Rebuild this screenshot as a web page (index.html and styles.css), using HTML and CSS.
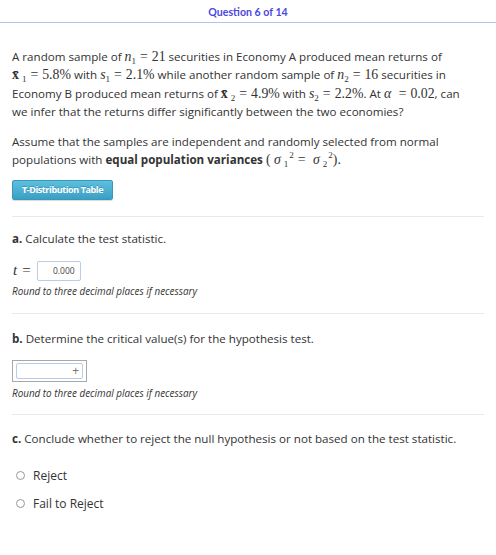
FILE: index.html
```html
<!DOCTYPE html>
<html>
<head>
<meta charset="utf-8">
<link rel="stylesheet" href="styles.css">
</head>
<body>
<div class="header"><span class="qnum">Question 6 of 14</span></div>
<div class="content">
  <p class="para">A random sample of <span class="m"><i>n</i><sub>1</sub><span class="eq">=</span>21</span> securities in Economy A produced mean returns of<br>
  <span class="m"><b>x̄</b><sub class="sp">1</sub><span class="eq">=</span>5.8%</span> with <span class="m"><i>s</i><sub>1</sub><span class="eq">=</span>2.1%</span> while another random sample of <span class="m"><i>n</i><sub>2</sub><span class="eq">=</span>16</span> securities in<br>
  Economy B produced mean returns of <span class="m"><b>x̄</b><sub class="sp">2</sub><span class="eq">=</span>4.9%</span> with <span class="m"><i>s</i><sub>2</sub><span class="eq">=</span>2.2%</span>. At <span class="m"><i>α</i> <span class="eq">=</span>0.02</span>, can<br>
  we infer that the returns differ significantly between the two economies?</p>
  <p class="para p2">Assume that the samples are independent and randomly selected from normal<br>
  populations with <b>equal population variances</b> <span class="m">( <i>σ</i><sub class="sp">1</sub><sup>2</sup><span class="eq">=</span> <i>σ</i><sub class="sp">2</sub><sup>2</sup>).</span></p>
  <button class="tbtn">T-Distribution Table</button>

  <section class="part pa">
    <p class="q"><b>a.</b> Calculate the test statistic.</p>
    <div class="ansrow"><span class="m tv"><i>t</i><span class="eq">=</span></span><span class="inp">0.000</span></div>
    <p class="hint">Round to three decimal places if necessary</p>
  </section>

  <section class="part pb">
    <p class="q"><b>b.</b> Determine the critical value(s) for the hypothesis test.</p>
    <div class="outer"><span class="inp2">+</span></div>
    <p class="hint">Round to three decimal places if necessary</p>
  </section>

  <section class="part pc">
    <p class="q"><b>c.</b> Conclude whether to reject the null hypothesis or not based on the test statistic.</p>
    <label class="radio"><span class="dot"></span>Reject</label>
    <label class="radio"><span class="dot"></span>Fail to Reject</label>
  </section>
</div>
</body>
</html>
```
FILE: styles.css
```css
html, body { margin: 0; padding: 0; background: #fff; }
body { font-family: "Open Sans", sans-serif; color: #333; font-size: 11.6px; }
.header {
  height: 22px;
  border-bottom: 1px solid #aec6ef;
  display: flex; justify-content: center; align-items: center;
}
.qnum { font-family: Lato, sans-serif; font-weight: bold; font-size: 10.6px; color: #4a48e0; margin-top: 1px; }
.content { padding: 0 12px; }
.para { margin: 25px 0 0; line-height: 18.3px; }
.p2 { margin-top: 12px; }
.m { font-family: "Liberation Serif", "DejaVu Serif", serif; font-size: 13.8px; color: #333; }
.m i { font-style: italic; }
.m b { font-weight: 600; }
.m sub { font-size: 9px; vertical-align: -3px; line-height: 0; }
.m sub.sp { margin-left: 3px; }
.m sup { font-size: 9px; vertical-align: 6px; line-height: 0; margin-left: 1px; }
.eq { margin: 0 4px; }
b { font-weight: bold; }
.tbtn {
  margin-top: 10px;
  display: block;
  font-family: "Open Sans", sans-serif; font-weight: bold; font-size: 9px;
  letter-spacing: -0.4px;
  color: #fff;
  text-shadow: 0 -1px 0 rgba(0,0,0,0.2);
  background: linear-gradient(#5cc0df, #3aa0c4);
  border: 1px solid #3a97b8;
  border-radius: 2px;
  width: 101px; height: 20px; padding: 0;
  box-shadow: 0 1px 1px rgba(0,0,0,0.15);
}
.part { border-top: 1px solid #e9e9e9; }
.pa { margin-top: 16px; padding-top: 13px; }
.pb { margin-top: 15px; padding-top: 16px; }
.pc { margin-top: 14px; padding-top: 15px; }
.q { margin: 0; line-height: 18px; }
.ansrow { display: flex; align-items: center; margin-top: 13px; gap: 3px; }
.tv { font-size: 15px; margin-left: 1px; }
.tv .eq { margin: 0 3px 0 5px; }
.inp {
  width: 44px; height: 20px; box-sizing: border-box;
  border: 1px solid #b8cde6; border-radius: 2px;
  font-size: 8.5px; color: #444; text-align: right; padding-right: 5px;
  line-height: 18px;
}
.hint { margin: 3px 0 0; font-style: italic; font-size: 9.9px; color: #333; }
.outer {
  margin-top: 12px;
  width: 75px; height: 22px; box-sizing: border-box;
  border: 1px solid #a8a8a8; padding: 2px 3px;
}
.inp2 {
  display: block; height: 16px; box-sizing: border-box;
  border: 1px solid #b8cde6; border-radius: 2px;
  text-align: right; padding-right: 3px;
  font-size: 12px; line-height: 13px; color: #777;
}
.pb .hint { margin-top: 4px; }
.radio { display: flex; align-items: center; gap: 8px; margin-left: 4px; line-height: 18px; font-size: 12px; }
.pc .radio:first-of-type { margin-top: 19px; }
.radio + .radio { margin-top: 10px; }
.dot { width: 7px; height: 7px; border: 1px solid #9a9a9a; border-radius: 50%; }
```
